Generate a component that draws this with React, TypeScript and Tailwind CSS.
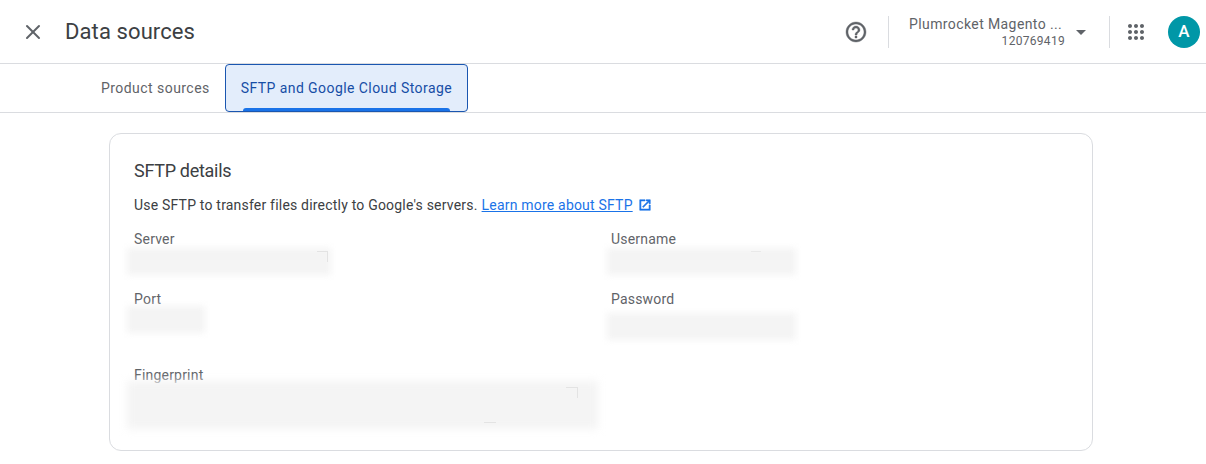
import { X } from "lucide-react";

function Redacted({ className = "", blur = "blur-[3px]", children }: { className?: string; blur?: string; children?: React.ReactNode }) {
  // blurred-out value: soft grey block, the marks left over stay sharp on top
  return (
    <div className={`relative ${className}`}>
      <div className={`h-full w-full bg-[#f4f4f4] ${blur}`} />
      {children}
    </div>
  );
}

function Field({ label, className = "" }: { label: string; className?: string }) {
  return <div className={`text-[14px] leading-[16px] tracking-[0.2px] text-[#5f6368] ${className}`}>{label}</div>;
}

export default function App() {
  return (
    <div className="h-[464px] w-[1206px] overflow-hidden bg-white font-['Roboto',sans-serif]">
      {/* Header */}
      <div className="flex h-[64px] items-center border-b border-[#dadce0] pr-[6px]">
        <X className="ml-[21px] text-[#5f6368]" size={24} strokeWidth={2} />
        <div className="ml-[20px] flex-1 text-[22px] leading-[28px] tracking-[0.1px] text-[#3c4043]">Data sources</div>
        <svg width="24" height="24" viewBox="0 0 24 24" fill="#5f6368" stroke="#5f6368" strokeWidth="0.4" className="mr-[20px]">
          <path d="M11 18h2v-2h-2v2zm1-16C6.48 2 2 6.48 2 12s4.48 10 10 10 10-4.48 10-10S17.52 2 12 2zm0 18c-4.41 0-8-3.59-8-8s3.590-8 8-8 8 3.590 8 8-3.590 8-8 8zm0-14c-2.210 0-4 1.790-4 4h2c0-1.100.9-2 2-2s2 .9 2 2c0 2-3 1.750-3 5h2c0-2.250 3-2.500 3-5 0-2.210-1.790-4-4-4z" />
        </svg>
        <div className="h-[32px] w-px bg-[#dadce0]" />
        <div className="ml-[20px] flex w-[156px] flex-col items-end text-[#5f6368]">
          <div className="w-full text-[14px] font-[450] leading-[18px] tracking-[0.4px]">Plumrocket Magento ...</div>
          <div className="text-[12px] leading-[16px] tracking-[0.3px]">120769419</div>
        </div>
        <svg width="24" height="24" viewBox="0 0 24 24" fill="#5f6368" className="ml-[4px]">
          <path d="M7 10l5 5 5-5z" />
        </svg>
        <div className="ml-[16px] h-[32px] w-px bg-[#dadce0]" />
        <svg width="24" height="24" viewBox="0 0 24 24" fill="#5f6368" className="ml-[14px]">
          <path d="M6 8c1.100 0 2-.9 2-2s-.9-2-2-2-2 .9-2 2 .9 2 2 2zm6 12c1.100 0 2-.9 2-2s-.9-2-2-2-2 .9-2 2 .9 2 2 2zm-6 0c1.100 0 2-.9 2-2s-.9-2-2-2-2 .9-2 2 .9 2 2 2zm0-6c1.100 0 2-.9 2-2s-.9-2-2-2-2 .9-2 2 .9 2 2 2zm6 0c1.100 0 2-.9 2-2s-.9-2-2-2-2 .9-2 2 .9 2 2 2zm4-8c0 1.100.9 2 2 2s2-.9 2-2-.9-2-2-2-2 .9-2 2zm-4 2c1.100 0 2-.9 2-2s-.9-2-2-2-2 .9-2 2 .9 2 2 2zm6 6c1.100 0 2-.9 2-2s-.9-2-2-2-2 .9-2 2 .9 2 2 2zm0 6c1.100 0 2-.9 2-2s-.9-2-2-2-2 .9-2 2 .9 2 2 2z" />
        </svg>
        <div className="ml-[20px] flex h-[32px] w-[32px] items-center justify-center rounded-full bg-[#0097a7] text-[17px] font-medium text-white">
          A
        </div>
      </div>

      {/* Tabs */}
      <div className="flex h-[49px] items-stretch border-b border-[#dadce0] pl-[85px]">
        <div className="flex items-center pl-[16px] pr-[15px] text-[14px] font-[450] tracking-[0.45px] text-[#5f6368]">Product sources</div>
        <div className="relative flex h-[48px] items-center rounded-[4px] border border-[#1a56b0] bg-[#e3edfb] px-[15px] text-[14px] font-[450] tracking-[0.43px] text-[#174ea6]">
          SFTP and Google Cloud Storage
          <div className="absolute bottom-0 left-[17px] right-[17px] h-[3px] rounded-t-[3px] bg-[#1a73e8]" />
        </div>
      </div>

      {/* Card */}
      <div className="ml-[109px] mt-[20px] h-[318px] w-[984px] rounded-[12px] border border-[#dadce0] pl-[24px] pt-[26px]">
        <div className="text-[18px] leading-[22px] tracking-[-0.3px] text-[#3c4043]">SFTP details</div>
        <div className="mt-[13px] flex items-center text-[14px] leading-[20px] tracking-[0.2px] text-[#3c4043]">
          Use SFTP to transfer files directly to Google's servers.
          <a className="ml-[4px] text-[#1a73e8] underline">Learn more about SFTP</a>
          <svg width="14" height="14" viewBox="0 0 24 24" fill="#1a73e8" stroke="#1a73e8" strokeWidth="1" className="ml-[5px]">
            <path d="M19 19H5V5h7V3H3v18h18v-9h-2v7zM14 3v2h3.590l-9.830 9.830 1.410 1.410L19 6.410V10h2V3h-7z" />
          </svg>
        </div>
        <div className="mt-[14px] grid grid-cols-[477px_1fr]">
          <div>
            <Field label="Server" className="mt-[2px]" />
            <Redacted className="-ml-[7px] mt-[1px] h-[27px] w-[204px]">
              <div className="absolute left-[190px] top-[3px] h-[11px] w-[11px] border-r border-t border-[#e3e3e3]" />
            </Redacted>
            <Field label="Port" className="mt-[16px]" />
            <Redacted className="-ml-[7px] mt-[-1px] h-[27px] w-[78px]" />
            <Field label="Fingerprint" className="mt-[34px]" />
            <Redacted blur="blur-[4px]" className="-ml-[7px] mt-[-2px] h-[48px] w-[471px]">
              <div className="absolute left-[439px] top-[6px] h-[11px] w-[12px] border-r border-t border-[#e3e3e3]" />
              <div className="absolute left-[357px] top-[41px] h-px w-[12px] bg-[#e3e3e3]" />
            </Redacted>
          </div>
          <div>
            <Field label="Username" className="mt-[2px]" />
            <Redacted className="-ml-[4px] mt-[1px] h-[27px] w-[189px]">
              <div className="absolute left-[144px] top-[3px] h-px w-[10px] bg-[#e9e9e9]" />
            </Redacted>
            <Field label="Password" className="mt-[16px]" />
            <Redacted className="-ml-[4px] mt-[6px] h-[27px] w-[189px]" />
          </div>
        </div>
      </div>
    </div>
  );
}
